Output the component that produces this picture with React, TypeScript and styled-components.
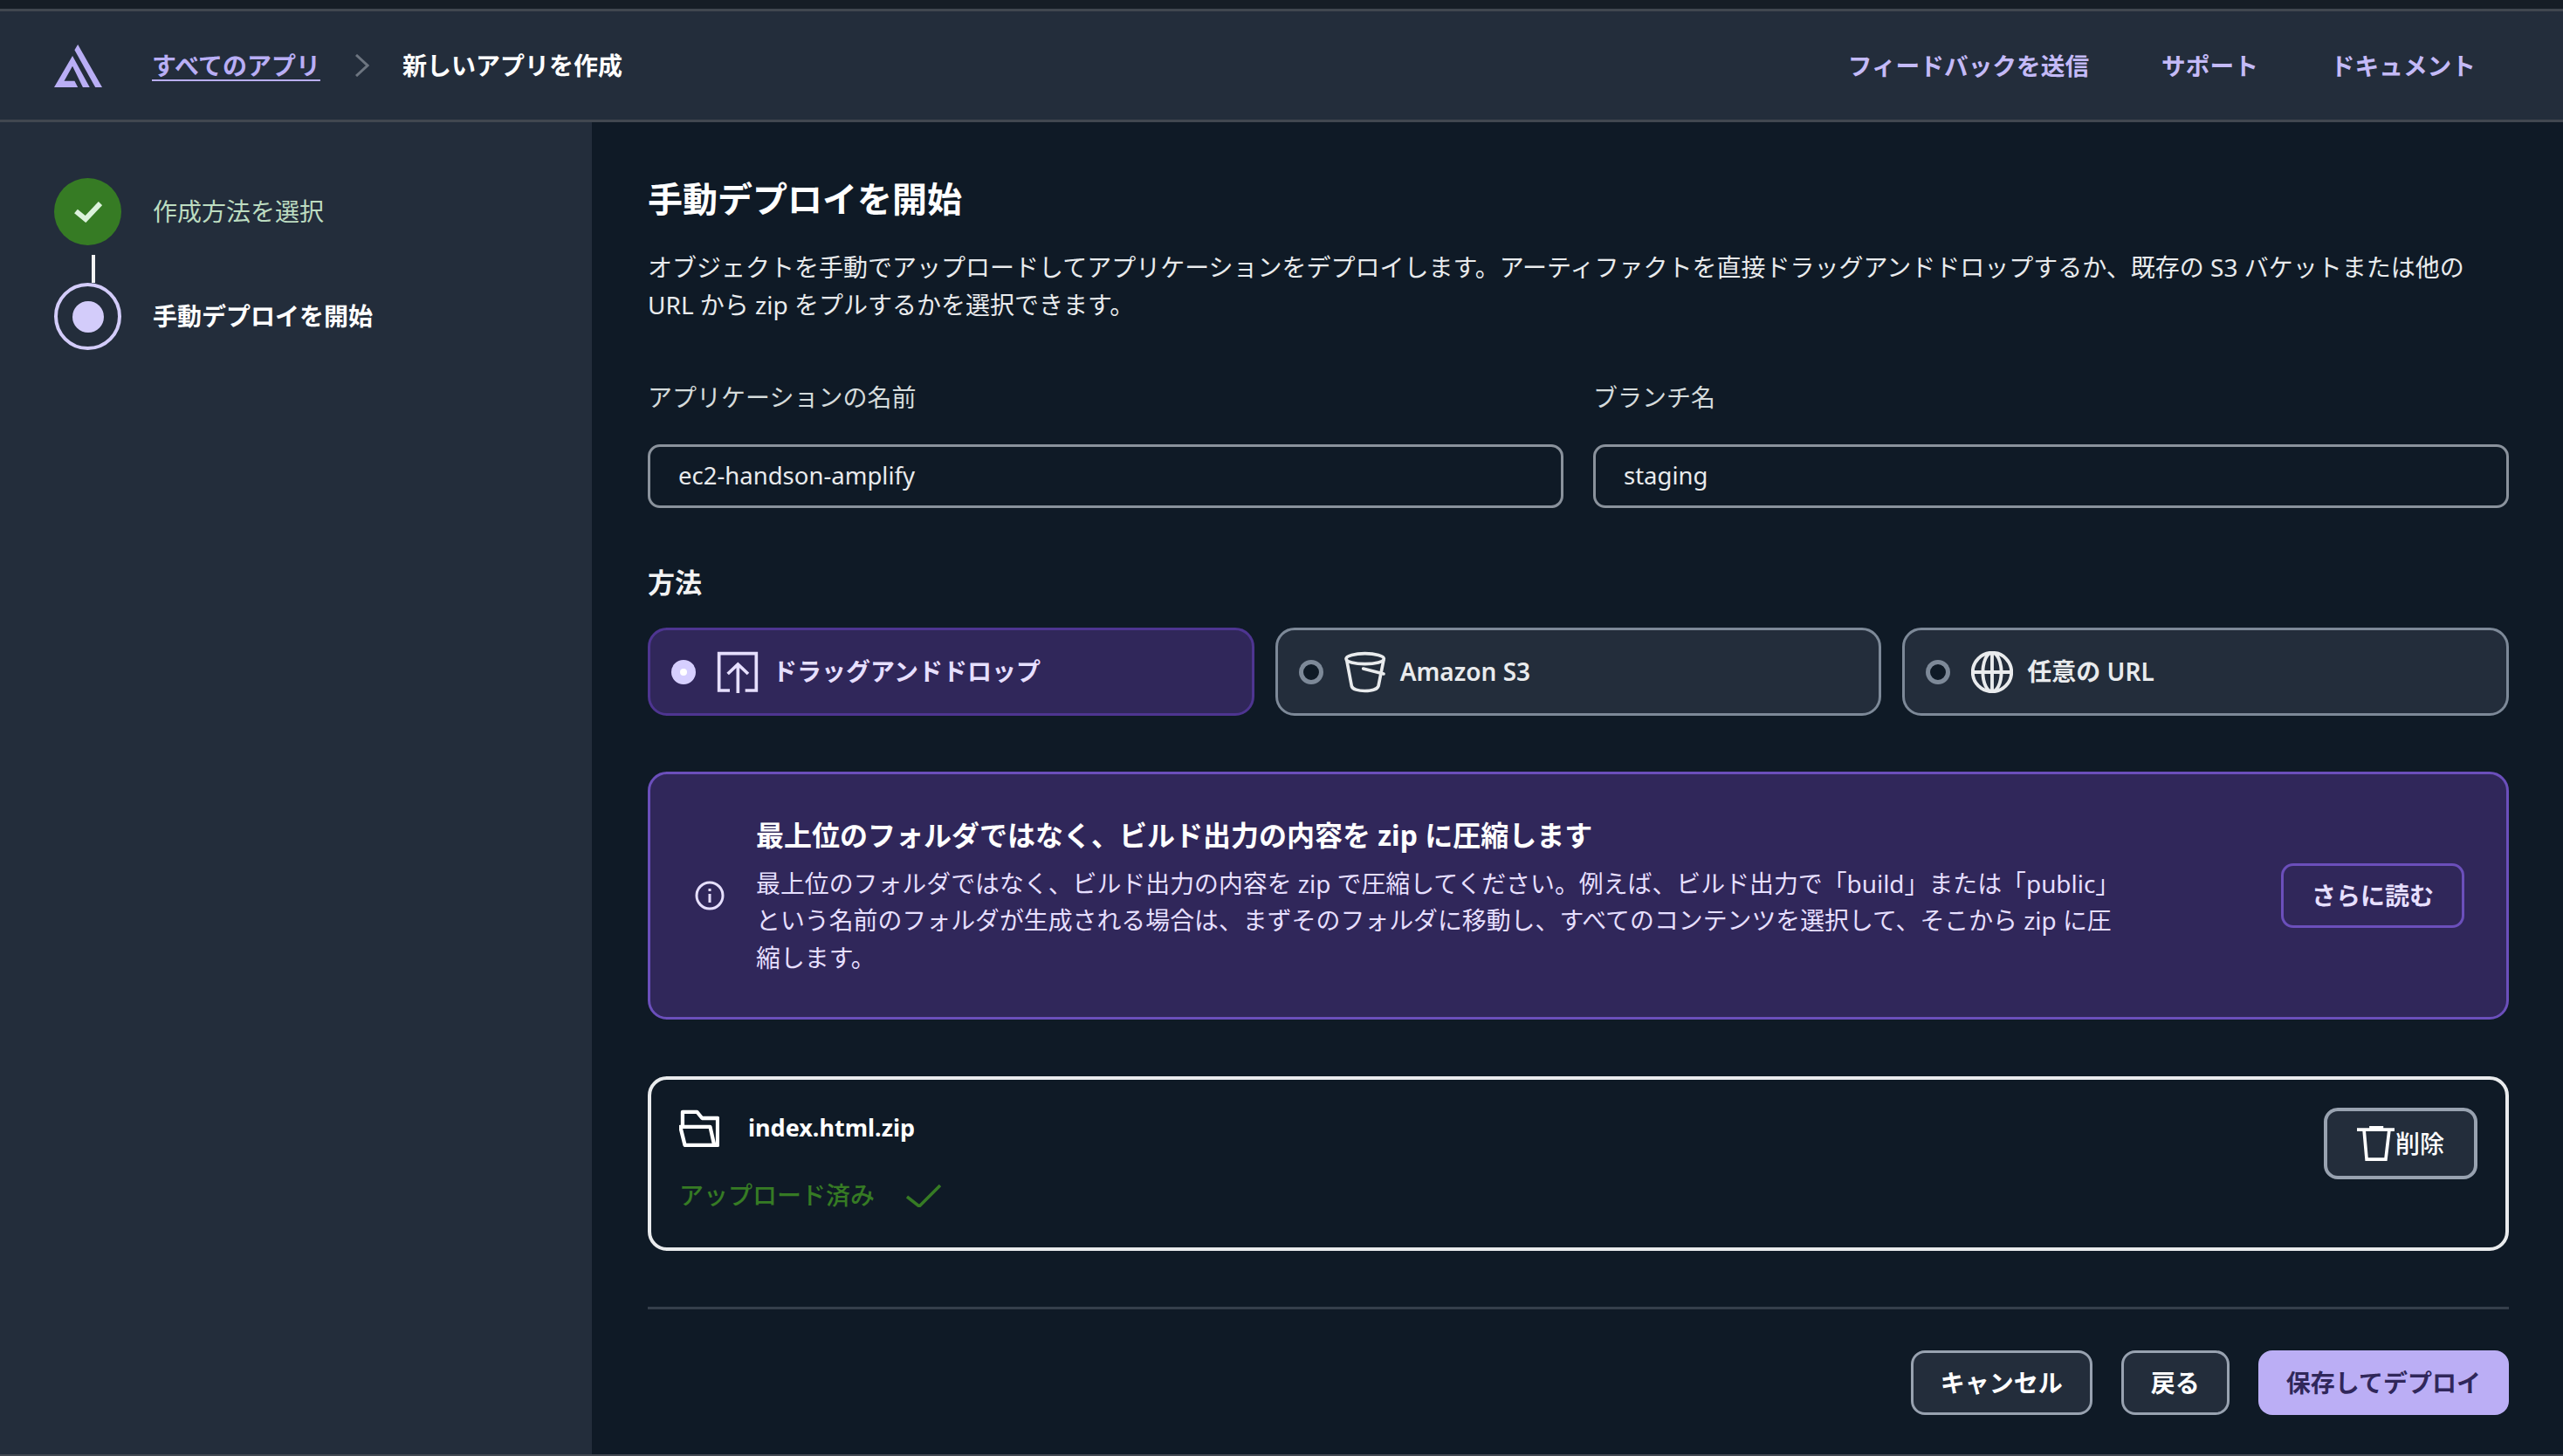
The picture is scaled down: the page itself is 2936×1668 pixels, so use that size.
import React from 'react';
import styled, {createGlobalStyle} from 'styled-components';

const GlobalStyle = createGlobalStyle`
  html, body {
    margin: 0;
    padding: 0;
    background: #0f1a26;
  }
  * {
    box-sizing: border-box;
  }
`;

const Page = styled.div`
  width: 2936px;
  height: 1668px;
  display: flex;
  flex-direction: column;
  overflow: hidden;
  background: #0f1a26;
  border-bottom: 2px solid #414750;
  font-family: 'Noto Sans', 'Noto Sans CJK JP', sans-serif;
  font-size: 28px;
  line-height: 42.5px;
  color: #e9ebed;
`;

const TopStrip = styled.div`
  height: 13px;
  flex: none;
  background: #161d26;
  border-bottom: 3px solid #414750;
`;

const Header = styled.header`
  height: 127px;
  flex: none;
  display: flex;
  align-items: center;
  justify-content: space-between;
  padding: 0 100px 0 62px;
  background: #232d3b;
  border-bottom: 3px solid #414750;
`;

const Crumbs = styled.nav`
  display: flex;
  align-items: center;
`;

const Logo = styled.svg`
  width: 55px;
  height: 49px;
  margin-right: 57px;
  fill: #b9aef5;
`;

const CrumbLink = styled.a`
  color: #b9aef5;
  font-weight: 600;
  text-decoration: underline;
  text-underline-offset: 5px;
  text-decoration-thickness: 2px;
`;

const Chevron = styled.svg`
  width: 16px;
  height: 26px;
  margin: 0 38px 0 40px;
  fill: none;
  stroke: #6d7580;
  stroke-width: 3;
`;

const CrumbCurrent = styled.span`
  color: #ffffff;
  font-weight: 600;
`;

const HeaderLinks = styled.div`
  display: flex;
  gap: 83px;
  font-size: 27.7px;
`;

const HeaderLink = styled.a`
  color: #c4baf7;
  font-weight: 600;
`;

const Body = styled.div`
  flex: 1;
  display: flex;
  min-height: 0;
`;

const Sidebar = styled.aside`
  width: 678px;
  flex: none;
  padding: 64px 0 0 62px;
  background: #232d3b;
`;

const Step = styled.div`
  display: flex;
  align-items: center;
  gap: 36px;
`;

const DoneCircle = styled.div`
  width: 77px;
  height: 77px;
  display: flex;
  align-items: center;
  justify-content: center;
  border-radius: 50%;
  background: #367b24;
`;

const ActiveCircle = styled.div`
  width: 77px;
  height: 77px;
  display: flex;
  align-items: center;
  justify-content: center;
  border: 4px solid #d3ccfa;
  border-radius: 50%;
`;

const ActiveDot = styled.div`
  width: 36px;
  height: 36px;
  border-radius: 50%;
  background: #d3ccfa;
`;

const Connector = styled.div`
  width: 4px;
  height: 43px;
  margin-left: 43px;
  border-top: 11px solid #232d3b;
  background: #f2f3f3;
`;

const StepLabel = styled.span<{$active?: boolean}>`
  color: ${(p) => (p.$active ? '#ffffff' : '#bcdcc0')};
  font-weight: ${(p) => (p.$active ? 700 : 400)};
`;

const Main = styled.main`
  flex: 1;
  padding: 63px 62px 0 64px;
`;

const Title = styled.h1`
  margin: 0;
  font-size: 40px;
  line-height: 50px;
  font-weight: 700;
  color: #ffffff;
`;

const Intro = styled.p`
  margin: 32px 0 0;
`;

const FieldRow = styled.div`
  display: grid;
  grid-template-columns: 1fr 1fr;
  gap: 34px;
  margin-top: 64px;
`;

const Field = styled.label`
  display: flex;
  flex-direction: column;
  gap: 32px;
  color: #d5dbdb;
`;

const Input = styled.div`
  height: 73px;
  display: flex;
  align-items: center;
  padding: 0 32px;
  border: 3px solid #8a929c;
  border-radius: 14px;
  color: #e9ebed;
  font-size: 27.5px;
`;

const SectionLabel = styled.div`
  margin-top: 64px;
  font-size: 31px;
  font-weight: 700;
  color: #f2f3f3;
`;

const Options = styled.div`
  display: grid;
  grid-template-columns: repeat(3, 1fr);
  gap: 24px;
  margin-top: 31px;
`;

const Option = styled.div<{$selected?: boolean}>`
  height: 101px;
  display: flex;
  align-items: center;
  padding-left: 24px;
  border: 3px solid ${(p) => (p.$selected ? '#4e3591' : '#7d8998')};
  border-radius: 22px;
  background: ${(p) => (p.$selected ? '#30275a' : '#232d3b')};
  color: ${(p) => (p.$selected ? '#e6dfff' : '#e9ebed')};
  font-weight: 600;
`;

const Radio = styled.span<{$selected?: boolean}>`
  width: 28px;
  height: 28px;
  flex: none;
  margin-right: 24px;
  border-radius: 50%;
  border: ${(p) => (p.$selected ? '10px solid #d6cfff' : '5px solid #7d8998')};
  background: ${(p) => (p.$selected ? '#ffffff' : '#0f1a26')};
`;

const OptionIcon = styled.svg`
  width: 48px;
  height: 48px;
  flex: none;
  margin-right: 16px;
  fill: none;
  stroke: currentColor;
  stroke-width: 11;
`;

const Alert = styled.section`
  height: 284px;
  display: flex;
  align-items: center;
  margin-top: 64px;
  padding: 0 48px 0 51px;
  border: 3px solid #6b4fbb;
  border-radius: 22px;
  background: #30275a;
  color: #e6dfff;
`;

const InfoIcon = styled.svg`
  width: 34px;
  height: 34px;
  flex: none;
  margin-right: 36px;
  fill: none;
  stroke: #e6dfff;
  stroke-width: 3;
`;

const AlertText = styled.div`
  flex: 1;
`;

const AlertTitle = styled.div`
  font-size: 32px;
  line-height: 46px;
  font-weight: 700;
  color: #ffffff;
  margin-bottom: 11px;
`;

const AlertBody = styled.div`
  font-size: 27.9px;
`;

const ReadMore = styled.button`
  height: 74px;
  padding: 0 32px;
  flex: none;
  border: 3px solid #6b4fbb;
  border-radius: 14px;
  background: transparent;
  color: #e6dfff;
  font: inherit;
  font-weight: 700;
`;

const FileCard = styled.section`
  height: 200px;
  display: flex;
  justify-content: space-between;
  margin-top: 65px;
  padding: 32px 32px 0 32px;
  border: 4px solid #e9ebed;
  border-radius: 22px;
`;

const FileInfo = styled.div`
  display: flex;
  flex-direction: column;
`;

const FileName = styled.div`
  display: flex;
  align-items: center;
  gap: 33px;
  height: 46px;
  font-size: 27px;
  font-weight: 700;
  color: #ffffff;
`;

const FolderIcon = styled.svg`
  width: 46px;
  height: 43px;
  fill: none;
  stroke: #ffffff;
  stroke-width: 13;
  stroke-linejoin: round;
`;

const Uploaded = styled.div`
  display: flex;
  align-items: center;
  gap: 36px;
  margin-top: 33px;
  color: #367b24;
  font-weight: 500;
`;

const CheckMark = styled.svg`
  width: 40px;
  height: 26px;
  margin-top: 2px;
  fill: none;
  stroke: #367b24;
  stroke-width: 3.5;
`;

const DeleteButton = styled.button`
  width: 176px;
  height: 82px;
  display: flex;
  align-items: center;
  justify-content: center;
  gap: 1px;
  border: 4px solid #98a2b0;
  border-radius: 16px;
  background: #232d3b;
  color: #ffffff;
  font: inherit;
  font-weight: 500;
`;

const TrashIcon = styled.svg`
  width: 43px;
  height: 40px;
  fill: none;
  stroke: #ffffff;
  stroke-width: 11;
`;

const Divider = styled.hr`
  height: 3px;
  margin: 64px 0 0;
  border: 0;
  background: #353f4b;
`;

const Actions = styled.div`
  display: flex;
  justify-content: flex-end;
  gap: 33px;
  margin-top: 47px;
`;

const ActionButton = styled.button<{$primary?: boolean}>`
  height: 74px;
  padding: 0 ${(p) => (p.$primary ? 32 : 31)}px;
  border: ${(p) => (p.$primary ? '0' : '3px solid #98a2b0')};
  border-radius: 16px;
  background: ${(p) => (p.$primary ? '#bbaef5' : '#232d3b')};
  color: ${(p) => (p.$primary ? '#30275a' : '#ffffff')};
  font: inherit;
  font-weight: 700;
`;

export default function App() {
  return (
    <>
      <GlobalStyle />
      <Page>
        <TopStrip />
        <Header>
          <Crumbs>
            <Logo viewBox="38 32 162 144">
              <path d="M118 32 L200 176 H177 L107 50 Z" />
              <path d="M100 70 L158 176 H135 L100 105 L72 155 H107 L118 176 H38 Z" />
            </Logo>
            <CrumbLink>すべてのアプリ</CrumbLink>
            <Chevron viewBox="0 0 16 26">
              <path d="M1 1 L14 13 L1 25" />
            </Chevron>
            <CrumbCurrent>新しいアプリを作成</CrumbCurrent>
          </Crumbs>
          <HeaderLinks>
            <HeaderLink>フィードバックを送信</HeaderLink>
            <HeaderLink>サポート</HeaderLink>
            <HeaderLink>ドキュメント</HeaderLink>
          </HeaderLinks>
        </Header>
        <Body>
          <Sidebar>
            <Step>
              <DoneCircle>
                <svg width="32" height="24" viewBox="0 0 32 24" fill="none" stroke="#dcf2dc" strokeWidth="6">
                  <path d="M2 11 L13 20 L30 2" />
                </svg>
              </DoneCircle>
              <StepLabel>作成方法を選択</StepLabel>
            </Step>
            <Connector />
            <Step>
              <ActiveCircle>
                <ActiveDot />
              </ActiveCircle>
              <StepLabel $active>手動デプロイを開始</StepLabel>
            </Step>
          </Sidebar>
          <Main>
            <Title>手動デプロイを開始</Title>
            <Intro>
              オブジェクトを手動でアップロードしてアプリケーションをデプロイします。アーティファクトを直接ドラッグアンドドロップするか、既存の S3 バケットまたは他の
              <br />
              URL から zip をプルするかを選択できます。
            </Intro>
            <FieldRow>
              <Field>
                アプリケーションの名前
                <Input>ec2-handson-amplify</Input>
              </Field>
              <Field>
                ブランチ名
                <Input>staging</Input>
              </Field>
            </FieldRow>
            <SectionLabel>方法</SectionLabel>
            <Options>
              <Option $selected>
                <Radio $selected />
                <OptionIcon viewBox="30 30 144 144">
                  <path d="M75 165 H38 V38 H166 V165 H128" />
                  <path d="M103 174 V75 M68 108 L103 75 L138 108" />
                </OptionIcon>
                ドラッグアンドドロップ
              </Option>
              <Option>
                <Radio />
                <OptionIcon viewBox="30 30 144 144">
                  <ellipse cx="101" cy="56" rx="65" ry="18" />
                  <path d="M38 60 L55 150 C60 172 140 172 147 150 L165 60" />
                  <path d="M95 90 L165 108" strokeLinecap="round" />
                </OptionIcon>
                Amazon S3
              </Option>
              <Option>
                <Radio />
                <OptionIcon viewBox="28 35 136 136">
                  <circle cx="96" cy="103" r="63" />
                  <ellipse cx="96" cy="103" rx="30" ry="63" />
                  <path d="M96 40 V166 M33 103 H159" />
                </OptionIcon>
                任意の URL
              </Option>
            </Options>
            <Alert>
              <InfoIcon viewBox="0 0 34 34">
                <circle cx="17" cy="17" r="15" />
                <path d="M17 15 V25 M17 9 V12" />
              </InfoIcon>
              <AlertText>
                <AlertTitle>最上位のフォルダではなく、ビルド出力の内容を zip に圧縮します</AlertTitle>
                <AlertBody>
                  最上位のフォルダではなく、ビルド出力の内容を zip で圧縮してください。例えば、ビルド出力で「build」または「public」
                  <br />
                  という名前のフォルダが生成される場合は、まずそのフォルダに移動し、すべてのコンテンツを選択して、そこから zip に圧
                  <br />
                  縮します。
                </AlertBody>
              </AlertText>
              <ReadMore>さらに読む</ReadMore>
            </Alert>
            <FileCard>
              <FileInfo>
                <FileName>
                  <FolderIcon viewBox="0 0 140 130">
                    <path d="M12 58 V8 H62 L80 30 H134 V124 H20 L4 60 H108 L122 122" />
                  </FolderIcon>
                  index.html.zip
                </FileName>
                <Uploaded>
                  アップロード済み
                  <CheckMark viewBox="0 0 40 26">
                    <path d="M1 14 L15 25 L39 1" />
                  </CheckMark>
                </Uploaded>
              </FileInfo>
              <DeleteButton>
                <TrashIcon viewBox="0 0 128 118">
                  <path d="M0 12 H128 M24 12 L33 113 H98 L110 12" />
                  <path d="M42 4 H90" />
                </TrashIcon>
                削除
              </DeleteButton>
            </FileCard>
            <Divider />
            <Actions>
              <ActionButton>キャンセル</ActionButton>
              <ActionButton>戻る</ActionButton>
              <ActionButton $primary>保存してデプロイ</ActionButton>
            </Actions>
          </Main>
        </Body>
      </Page>
    </>
  );
}
